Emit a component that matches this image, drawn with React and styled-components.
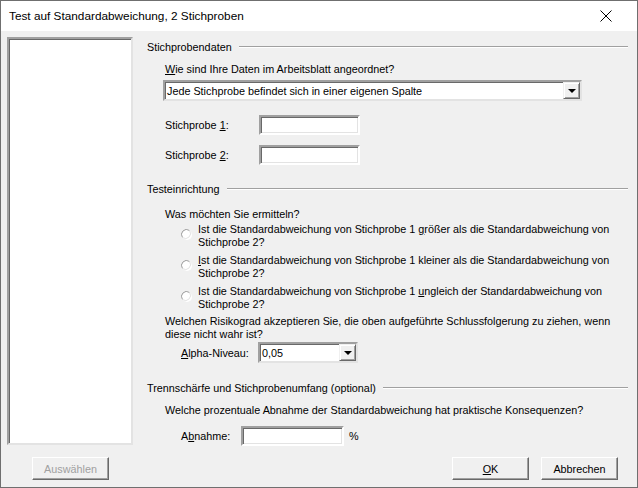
import React from 'react';
import styled, { createGlobalStyle } from 'styled-components';

const Global = createGlobalStyle`
  html, body { margin: 0; padding: 0; background: #f0f0f0; }
  body { font-family: "Liberation Sans", Arial, sans-serif; font-size: 10.8px; color: #000; }
`;

const Window = styled.div`
  width: 638px;
  height: 488px;
  box-sizing: border-box;
  border: 1px solid #6f6f6f;
  background: #f0f0f0;
  display: flex;
  flex-direction: column;
`;

const TitleBar = styled.div`
  height: 30px;
  flex: none;
  background: #fff;
  display: flex;
  align-items: center;
  justify-content: space-between;
  padding: 0 25px 0 8px;
  font-size: 11.8px;
`;

const Body = styled.div`
  flex: 1;
  min-height: 0;
  display: flex;
  padding: 6px 0 0 6px;
`;

const ListBox = styled.div`
  width: 126px;
  height: 408px;
  flex: none;
  box-sizing: border-box;
  background: #fff;
  border: 2px solid;
  border-color: #a0a0a0 #e3e3e3 #e3e3e3 #a0a0a0;
  box-shadow: inset 1px 1px 0 #696969;
`;

const Main = styled.div`
  flex: 1;
  padding: 3px 9px 0 14px;
`;

const GroupHeader = styled.div`
  display: flex;
  align-items: center;
  height: 14px;
  margin-top: ${p => p.$top}px;
  &::after {
    content: '';
    flex: 1;
    height: 1px;
    background: #a0a0a0;
    border-bottom: 1px solid #fff;
    margin-left: 7px;
  }
`;

const Indent = styled.div`
  padding-left: ${p => p.$left || 18}px;
  margin-top: ${p => p.$top || 0}px;
`;

const Label = styled.div`
  line-height: 14px;
  white-space: nowrap;
`;

const Para = styled.div`
  line-height: 13px;
  white-space: nowrap;
`;

const U = styled.span`text-decoration: underline;`;

const ComboWrap = styled.div`
  margin: 4px 0 0 -2px;
`;

const Combo = styled.div`
  width: ${p => p.$w}px;
  height: 21px;
  box-sizing: border-box;
  background: #fff;
  border: 2px solid;
  border-color: #a0a0a0 #e3e3e3 #e3e3e3 #a0a0a0;
  box-shadow: inset 1px 1px 0 #696969;
  display: flex;
  align-items: center;
  padding-left: 2px;
`;

const ComboText = styled.span`
  flex: 1;
  line-height: 14px;
`;

const ArrowBtn = styled.div`
  width: 17px;
  height: 17px;
  box-sizing: border-box;
  background: #f0f0f0;
  border: 1px solid;
  border-color: #f0f0f0 #696969 #696969 #f0f0f0;
  box-shadow: inset 1px 1px 0 #fff, inset -1px -1px 0 #a0a0a0;
  display: flex;
  align-items: center;
  justify-content: center;
`;

const Triangle = styled.span`
  width: 0;
  height: 0;
  border-left: 4px solid transparent;
  border-right: 4px solid transparent;
  border-top: 4px solid #000;
`;

const FieldRow = styled.div`
  display: flex;
  align-items: center;
  margin-top: ${p => p.$top}px;
`;

const FieldLabel = styled.div`
  width: ${p => p.$w}px;
  line-height: 14px;
`;

const Input = styled.div`
  width: ${p => p.$w}px;
  height: 20px;
  box-sizing: border-box;
  background: #fff;
  border: 2px solid;
  border-color: #a0a0a0 #fff #fff #a0a0a0;
  box-shadow: inset 1px 1px 0 #696969, inset -1px -1px 0 #e3e3e3;
`;

const Percent = styled.span`margin-left: 5px;`;

const RadioRow = styled.div`
  display: flex;
  align-items: flex-start;
  padding-left: 34px;
  margin-top: ${p => p.$top}px;
`;

const RadioDot = styled.svg`
  width: 12px;
  height: 12px;
  margin: 6px 5px 0 0;
  flex: none;
`;

const Footer = styled.div`
  height: 42px;
  flex: none;
  box-sizing: border-box;
  display: flex;
  align-items: flex-start;
  padding: 12px 19px 0 31px;
`;

const Button = styled.div`
  width: 77px;
  height: 23px;
  box-sizing: border-box;
  background: #f0f0f0;
  border: 1px solid;
  border-color: #fff #696969 #696969 #fff;
  box-shadow: inset -1px -1px 0 #a0a0a0;
  display: flex;
  align-items: center;
  justify-content: center;
  color: ${p => (p.$disabled ? '#a0a0a0' : '#000')};
  margin-left: ${p => p.$left || 0}px;
`;

const Spacer = styled.div`flex: 1;`;

const Radio = () => (
  <RadioDot viewBox="0 0 12 12">
    <circle cx="6" cy="6" r="5" fill="#fff" />
    <path d="M1.5 8.5 A5 5 0 0 1 8.5 1.5" fill="none" stroke="#a0a0a0" strokeWidth="1" />
    <path d="M8.5 1.5 A5 5 0 0 1 1.5 8.5" fill="none" stroke="#e3e3e3" strokeWidth="1" />
  </RadioDot>
);

export default function App() {
  return (
    <>
      <Global />
      <Window>
        <TitleBar>
          <span>Test auf Standardabweichung, 2 Stichproben</span>
          <svg width="12" height="12" viewBox="0 0 12 12">
            <path d="M0.5 0.5 L11.5 11.5 M11.5 0.5 L0.5 11.5" stroke="#000" strokeWidth="1" />
          </svg>
        </TitleBar>
        <Body>
          <ListBox />
          <Main>
            <GroupHeader $top={0}>Stichprobendaten</GroupHeader>
            <Indent $top={8}>
              <Label><U>W</U>ie sind Ihre Daten im Arbeitsblatt angeordnet?</Label>
              <ComboWrap>
                <Combo $w={419}>
                  <ComboText>Jede Stichprobe befindet sich in einer eigenen Spalte</ComboText>
                  <ArrowBtn><Triangle /></ArrowBtn>
                </Combo>
              </ComboWrap>
              <FieldRow $top={14}>
                <FieldLabel $w={94}>Stichprobe <U>1</U>:</FieldLabel>
                <Input $w={101} />
              </FieldRow>
              <FieldRow $top={10}>
                <FieldLabel $w={94}>Stichprobe <U>2</U>:</FieldLabel>
                <Input $w={101} />
              </FieldRow>
            </Indent>
            <GroupHeader $top={17}>Testeinrichtung</GroupHeader>
            <Indent $top={11}>
              <Label>Was möchten Sie ermitteln?</Label>
            </Indent>
            <RadioRow $top={2}>
              <Radio />
              <Para>
                Ist die Standardabweichung von Stichprobe 1 <U>g</U>rößer als die Standardabweichung von<br />
                Stichprobe 2?
              </Para>
            </RadioRow>
            <RadioRow $top={5}>
              <Radio />
              <Para>
                <U>I</U>st die Standardabweichung von Stichprobe 1 kleiner als die Standardabweichung von<br />
                Stichprobe 2?
              </Para>
            </RadioRow>
            <RadioRow $top={5}>
              <Radio />
              <Para>
                Ist die Standardabweichung von Stichprobe 1 <U>u</U>ngleich der Standardabweichung von<br />
                Stichprobe 2?
              </Para>
            </RadioRow>
            <Indent $top={4}>
              <Para>
                Welchen Risikograd akzeptieren Sie, die oben aufgeführte Schlussfolgerung zu ziehen, wenn<br />
                diese nicht wahr ist?
              </Para>
            </Indent>
            <Indent $left={34} $top={1}>
              <FieldRow $top={0}>
                <FieldLabel $w={77}><U>A</U>lpha-Niveau:</FieldLabel>
                <Combo $w={100}>
                  <ComboText>0,05</ComboText>
                  <ArrowBtn><Triangle /></ArrowBtn>
                </Combo>
              </FieldRow>
            </Indent>
            <GroupHeader $top={18}>Trennschärfe und Stichprobenumfang (optional)</GroupHeader>
            <Indent $top={8}>
              <Label>Welche prozentuale Abnahme der Standardabweichung hat praktische Konsequenzen?</Label>
            </Indent>
            <Indent $left={34} $top={9}>
              <FieldRow $top={0}>
                <FieldLabel $w={60}>A<U>b</U>nahme:</FieldLabel>
                <Input $w={103} />
                <Percent>%</Percent>
              </FieldRow>
            </Indent>
          </Main>
        </Body>
        <Footer>
          <Button $disabled>Auswählen</Button>
          <Spacer />
          <Button><U>O</U>K</Button>
          <Button $left={12}>Abbrechen</Button>
        </Footer>
      </Window>
    </>
  );
}
